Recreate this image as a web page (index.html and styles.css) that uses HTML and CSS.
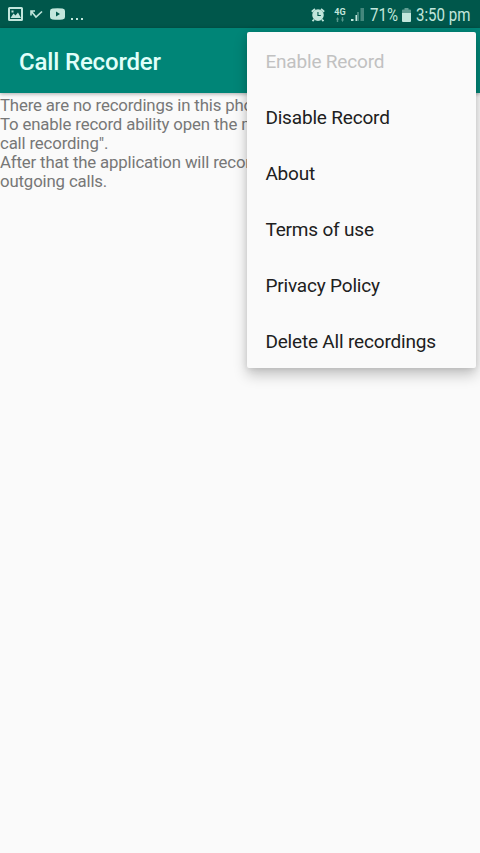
FILE: index.html
```html
<!DOCTYPE html>
<html lang="en">
<head>
<meta charset="utf-8">
<title>Call Recorder</title>
<link rel="stylesheet" href="styles.css">
</head>
<body>
<div class="status">
  <div class="notifications">
    <svg class="photo" width="15" height="14" viewBox="0 0 15 14"><path fill-rule="evenodd" d="M1.500 0h12Q15 0 15 1.500v11Q15 14 13.500 14h-12Q0 14 0 12.500v-11Q0 0 1.500 0zM2 2v10h11V2zM2.500 11l3-4.500 2 2 2.500-3 3 5.500zM3.500 3.500h2v2h-2z"/></svg>
    <svg class="missed" width="13" height="9" viewBox="0 0 13 9"><path d="M1 5.500V1h4M1.500 1.500L6 7 12 1.500" fill="none" stroke="currentColor" stroke-width="1.600"/></svg>
    <svg class="video" width="15" height="12" viewBox="0 0 15 12"><path fill-rule="evenodd" d="M2.500.5Q7.500 0 12.500.5 15 .7 15 3v6q0 2.300-2.500 2.500-5 .5-10 0Q0 11.300 0 9V3Q0 .7 2.500.5zM6 3.500v5L10 6z"/></svg>
    <span class="dots"><i></i><i></i><i></i></span>
  </div>
  <div class="system">
    <svg class="alarm" width="14" height="14" viewBox="0 0 14 14"><path d="M.8 3.800L4 1M13.200 3.800L10 1M3 11.500L1.500 13.200M11 11.500l1.500 1.700" stroke="currentColor" stroke-width="1.800"/><path fill-rule="evenodd" d="M7 1.300a5.800 5.800 0 1 1 0 11.600A5.800 5.800 0 0 1 7 1.300zM6.400 4v4.100h3.400V7H7.500V4z"/></svg>
    <div class="network"><span>4G</span><svg width="8" height="5" viewBox="0 0 8 5"><path opacity=".45" d="M0 2.500L1.500 0 3 2.500H2.200V5H.8V2.500zM5 2.500h.8V0h1.400v2.500H8L6.500 5z"/></svg></div>
    <svg class="signal" width="14" height="13" viewBox="0 0 14 13"><path d="M0 11h2.500v2H0zM4.500 7H6v6H4.500z"/><path opacity=".35" d="M6 4h2v9H6zM9.500 0H13v13H9.500z"/></svg>
    <span class="percent">71%</span>
    <svg class="battery" width="9" height="14" viewBox="0 0 9 14"><path d="M0 5h9v8q0 1-1 1H1q-1 0-1-1z"/><path opacity=".5" d="M2.500 0h4v1.500H8q1 0 1 1V5H0V2.500q0-1 1-1h1.500z"/></svg>
    <span class="clock">3:50 pm</span>
  </div>
</div>
<header class="appbar"><h1>Call Recorder</h1></header>
<main class="message">
  <p>There are no recordings in this phone.</p>
  <p>To enable record ability open the menu and "Enable<br>call recording".</p>
  <p>After that the application will record incoming and<br>outgoing calls.</p>
</main>
<nav class="menu">
  <a class="disabled">Enable Record</a>
  <a>Disable Record</a>
  <a>About</a>
  <a>Terms of use</a>
  <a>Privacy Policy</a>
  <a>Delete All recordings</a>
</nav>
</body>
</html>
```
FILE: styles.css
```css
* { box-sizing: border-box; }
body {
  margin: 0;
  height: 853px;
  overflow: hidden;
  position: relative;
  background: #fafafa;
  font-family: Roboto, sans-serif;
}
svg { display: block; fill: currentColor; flex: none; }
.status {
  height: 28px;
  display: flex;
  justify-content: space-between;
  padding: 0 10px 0 8px;
  background: #00574b;
  color: #c2e6dc;
}
.notifications, .system { display: flex; align-items: center; }
.notifications { height: 28px; }
.missed { margin-left: 7px; }
.video { margin-left: 7px; }
.dots { display: flex; gap: 3px; margin: 10px 0 0 6px; }
.dots i { width: 2px; height: 2px; background: currentColor; }
.system { height: 29px; white-space: nowrap; }
.network {
  width: 12px;
  margin-left: 9px;
  display: flex;
  flex-direction: column;
  align-items: center;
  font-size: 9px;
  font-weight: 700;
  line-height: 9px;
}
.signal { margin-left: 5px; }
.percent, .clock {
  font-size: 17.500px;
  line-height: 28px;
  padding-top: 1px;
  transform: scaleX(.86);
  transform-origin: 0 50%;
}
.percent { width: 27px; margin-left: 5px; }
.battery { margin-left: 5px; }
.clock { width: 54px; margin-left: 5px; }
.appbar {
  height: 65px;
  display: flex;
  align-items: center;
  padding: 2px 19px 0;
  background: #008577;
  box-shadow: 0 1px 4px rgba(0, 0, 0, .32);
}
.appbar h1 { margin: 0; color: #e0fffa; font-size: 24px; font-weight: 500; line-height: 32px; letter-spacing: -.17px; }
.message { padding-top: 3px; color: #777; font-size: 16.800px; line-height: 19.100px; letter-spacing: -.15px; white-space: nowrap; }
.message p { margin: 0; }
.menu {
  position: absolute;
  top: 32px;
  left: 247px;
  width: 229px;
  height: 336px;
  display: flex;
  flex-direction: column;
  border-radius: 2px;
  background: #fafafa;
  box-shadow: 0 7px 14px rgba(0, 0, 0, .22), 0 1px 6px rgba(0, 0, 0, .1);
}
.menu a { height: 56px; padding: 2px 18.400px 0; color: #202020; font-size: 19px; line-height: 55px; letter-spacing: -.18px; white-space: nowrap; }
.menu .disabled { color: #c1c1c1; }
```
